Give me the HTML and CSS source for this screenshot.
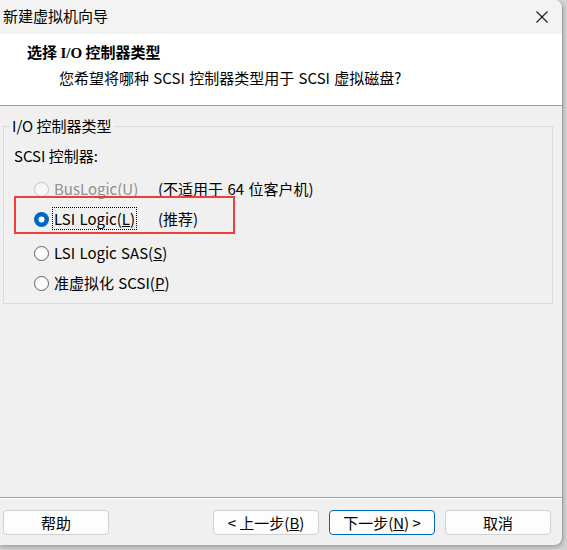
FILE: index.html
```html
<!DOCTYPE html>
<html lang="zh-CN">
<head>
<meta charset="utf-8">
<title>新建虚拟机向导</title>
<link rel="stylesheet" href="styles.css">
</head>
<body>
<div class="window">
  <div class="titlebar">
    <span class="title">新建虚拟机向导</span>
    <svg class="close" width="12" height="12" viewBox="0 0 12 12"><path d="M0.5 0.5 L11.5 11.5 M11.5 0.5 L0.5 11.5" stroke="#1a1a1a" stroke-width="1.1" fill="none"/></svg>
  </div>
  <div class="header">
    <div class="h-title">选择 <span class="serif">I/O</span> 控制器类型</div>
    <div class="h-sub">您希望将哪种 SCSI 控制器类型用于 SCSI 虚拟磁盘?</div>
  </div>
  <div class="main">
    <fieldset class="group">
      <legend>I/O 控制器类型</legend>
      <div class="caption">SCSI 控制器:</div>
      <div class="opts">
        <div class="opt disabled spaced">
          <span class="radio"></span>
          <span class="lbl">BusLogic(<u>U</u>)</span>
          <span class="note">(不适用于 64 位客户机)</span>
        </div>
        <div class="opt">
          <span class="radio checked"></span>
          <span class="lbl"><span class="focus">LSI Logic(<u>L</u>)</span></span>
          <span class="note">(推荐)</span>
        </div>
        <div class="opt spaced">
          <span class="radio"></span>
          <span class="lbl">LSI Logic SAS(<u>S</u>)</span>
        </div>
        <div class="opt">
          <span class="radio"></span>
          <span class="lbl">准虚拟化 SCSI(<u>P</u>)</span>
        </div>
      </div>
    </fieldset>
  </div>
  <div class="footer">
    <button class="btn">帮助</button>
    <div class="spacer"></div>
    <button class="btn">&lt; 上一步(<u>B</u>)</button>
    <button class="btn default">下一步(<u>N</u>) &gt;</button>
    <button class="btn">取消</button>
  </div>
  <div class="annot"></div>
</div>
</body>
</html>
```

FILE: styles.css
```css
* { box-sizing: border-box; }
html, body { margin: 0; padding: 0; }
body {
  background: #d2d2d2;
  font-family: "Noto Sans CJK SC", sans-serif;
  font-size: 15px;
  color: #000;
  width: 567px;
  height: 550px;
  overflow: hidden;
}
.window {
  position: relative;
  width: 563px;
  height: 545px;
  background: #f0f0f0;
  border-right: 1px solid #9c9c9c;
  border-radius: 0 8px 8px 0;
  box-shadow: 0 2px 4px rgba(0,0,0,0.25);
  display: flex;
  flex-direction: column;
  overflow: hidden;
}
.titlebar {
  height: 34px;
  background: #f3f3f3;
  display: flex;
  align-items: center;
  justify-content: space-between;
  padding: 0 14px 3px 3px;
  line-height: 20px;
}
.close { display: block; margin-top: 3px; }
.header {
  height: 72px;
  background: #fff;
  border-bottom: 1px solid #a0a0a0;
  padding: 8px 0 0 27px;
  line-height: 20px;
}
.h-title { font-weight: bold; }
.serif { font-family: "Liberation Serif", serif; font-weight: bold; }
.h-sub { margin-top: 5px; padding-left: 32px; word-spacing: 1px; }
.main { flex: 1; padding: 10px 10px 0 3px; }
.group {
  margin: 0;
  border: 1px solid #dcdcdc;
  padding: 0 6px 10px 6px;
  width: 550px;
}
.group legend {
  padding: 0 2px;
  line-height: 20px;
}
.caption { line-height: 20px; margin: 10px 0 0 4px; }
.opts { display: flex; flex-direction: column; gap: 10px; margin: 9px 0 0 24px; }
.opt.spaced { margin-top: 4px; }
.opt { display: flex; align-items: center; height: 20px; line-height: 20px; word-spacing: 1px; }
.radio {
  width: 15px;
  height: 15px;
  border-radius: 50%;
  border: 1px solid #5e5e5e;
  background: #fcfcfc;
  margin-right: 5px;
  flex: none;
}
.radio.checked {
  border: none;
  background: radial-gradient(circle, #fff 0 2.8px, #0067c0 3.3px);
}
.disabled .radio { border-color: #c5c5c5; background: #f7f7f7; }
.disabled .lbl { color: #8f8f8f; }
.lbl { min-width: 104px; }
.focus { outline: 1px dotted #000; outline-offset: 0; padding: 0 1px; margin-left: -1px; }
.footer {
  height: 48px;
  border-top: 1px solid #a0a0a0;
  box-shadow: inset 0 1px 0 #fff;
  display: flex;
  align-items: flex-start;
  gap: 10px;
  padding: 12px 11px 0 3px;
}
.spacer { flex: 1; }
.btn {
  width: 106px;
  height: 25px;
  background: #fdfdfd;
  border: 1px solid #d0d0d0;
  border-radius: 4px;
  font: inherit;
  font-size: 15px;
  line-height: 20px;
  padding: 0;
  color: #000;
}
.btn.default { border-color: #0067c0; }
.annot {
  position: absolute;
  left: 14px;
  top: 196px;
  width: 221px;
  height: 38px;
  border: 2px solid #f03c3c;
  pointer-events: none;
}
```
